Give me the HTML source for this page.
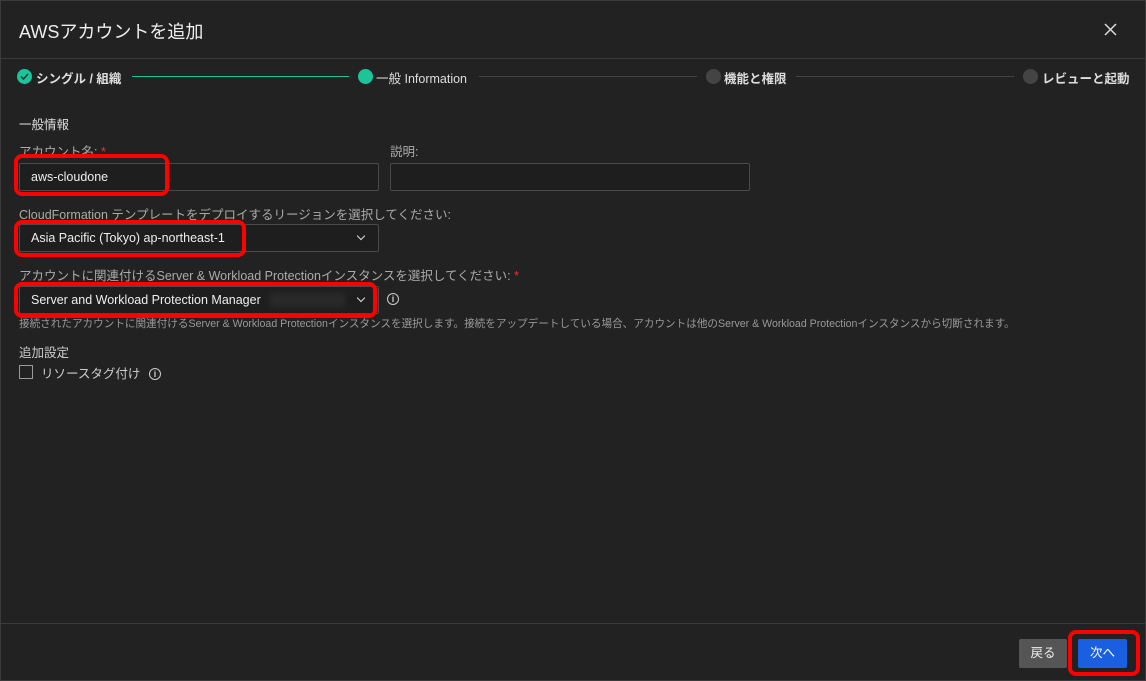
<!DOCTYPE html><html><head><meta charset="utf-8"><style>
*{box-sizing:border-box;margin:0;padding:0}
body{width:1146px;height:681px;background:#222;font-family:"Liberation Sans","Noto Sans CJK JP",sans-serif;color:#ddd;position:relative;overflow:hidden}
.a{position:absolute}
.t{font-size:12.5px;color:#aaa}
.inp{position:absolute;border:1px solid #4a4a4a;border-radius:2px;background:#1e1e1e;height:28px;font-size:12.5px;color:#eee;padding:6px 11px}
.red{position:absolute;border:4px solid #f00;border-radius:8px}
.dot{position:absolute;width:15px;height:15px;border-radius:50%}
.chev{position:absolute;width:6px;height:6px;border-right:1.5px solid #ddd;border-bottom:1.5px solid #ddd;transform:rotate(45deg)}
.info{position:absolute;width:12px;height:12px;border:1.3px solid #ccc;border-radius:50%;font-size:9px;text-align:center;line-height:10px;color:#ccc;font-weight:bold}
.st{position:absolute;top:68px;font-size:12.5px;color:#ddd}
</style></head><body>
<div class="a" style="left:0;top:0;width:1146px;height:681px;border:1px solid #3a3a3a"></div>
<div class="a" style="left:19px;top:18px;font-size:18px;color:#eee">AWSアカウントを追加</div>
<svg class="a" style="left:1104px;top:23px" width="13" height="13"><path d="M1 1L12 12M12 1L1 12" stroke="#ddd" stroke-width="1.5"/></svg>
<div class="a" style="left:0;top:58px;width:1146px;height:1px;background:#3a3a3a"></div>
<svg class="a" style="left:17px;top:69px" width="15" height="15"><circle cx="7.5" cy="7.5" r="7.5" fill="#1cc49c"/><path d="M4 7.5L6.5 10L11 5" stroke="#1a3a30" stroke-width="1.5" fill="none"/></svg>
<div class="st" style="left:36px;font-weight:bold">シングル / 組織</div>
<div class="a" style="left:132px;top:76px;width:217px;height:1px;background:#1cc49c"></div>
<div class="dot" style="left:358px;top:69px;background:#1cc49c"></div>
<div class="st" style="left:376px">一般 Information</div>
<div class="a" style="left:479px;top:76px;width:218px;height:1px;background:#444"></div>
<div class="dot" style="left:706px;top:69px;background:#444"></div>
<div class="st" style="left:724px;font-weight:bold">機能と権限</div>
<div class="a" style="left:796px;top:76px;width:218px;height:1px;background:#444"></div>
<div class="dot" style="left:1023px;top:69px;background:#444"></div>
<div class="st" style="left:1042px;font-weight:bold">レビューと起動</div>
<div class="a" style="left:19px;top:114px;font-size:12.5px;color:#ddd">一般情報</div>
<div class="a t" style="left:19px;top:141px">アカウント名: <span style="color:#e33">*</span></div>
<div class="a t" style="left:390px;top:141px">説明:</div>
<div class="inp" style="left:19px;top:163px;width:360px">aws-cloudone</div>
<div class="inp" style="left:390px;top:163px;width:360px"></div>
<div class="a t" style="left:19px;top:204px">CloudFormation テンプレートをデプロイするリージョンを選択してください:</div>
<div class="inp" style="left:19px;top:224px;width:360px">Asia Pacific (Tokyo) ap-northeast-1</div>
<div class="chev" style="left:358px;top:233px"></div>
<div class="a t" style="left:19px;top:265px">アカウントに関連付けるServer &amp; Workload Protectionインスタンスを選択してください: <span style="color:#e33">*</span></div>
<div class="inp" style="left:19px;top:286px;width:360px">Server and Workload Protection Manager</div>
<div class="a" style="left:270px;top:293px;width:75px;height:14px;background:#2a2a2a;filter:blur(3px)"></div>
<div class="chev" style="left:358px;top:295px"></div>
<div class="info" style="left:387px;top:293px">i</div>
<div class="a" style="left:19px;top:316px;font-size:10.6px;color:#999;white-space:nowrap">接続されたアカウントに関連付けるServer &amp; Workload Protectionインスタンスを選択します。接続をアップデートしている場合、アカウントは他のServer &amp; Workload Protectionインスタンスから切断されます。</div>
<div class="a" style="left:19px;top:342px;font-size:12.5px;color:#ccc">追加設定</div>
<div class="a" style="left:19px;top:365px;width:14px;height:14px;border:1px solid #999"></div>
<div class="a" style="left:41px;top:363px;font-size:12.5px;color:#ccc">リソースタグ付け</div>
<div class="info" style="left:149px;top:368px">i</div>
<div class="red" style="left:14px;top:154px;width:155px;height:42px"></div>
<div class="red" style="left:14px;top:220px;width:232px;height:37px"></div>
<div class="red" style="left:14px;top:282px;width:363px;height:36px"></div>
<div class="a" style="left:0;top:623px;width:1146px;height:1px;background:#3a3a3a"></div>
<div class="a" style="left:1019px;top:639px;width:48px;height:29px;background:#555;border-radius:2px;font-size:12.5px;color:#eee;text-align:center;line-height:29px">戻る</div>
<div class="a" style="left:1078px;top:639px;width:49px;height:29px;background:#1a5fe0;border-radius:2px;font-size:12.5px;color:#fff;text-align:center;line-height:29px">次へ</div>
<div class="red" style="left:1068px;top:630px;width:72px;height:46px"></div>
</body></html>
